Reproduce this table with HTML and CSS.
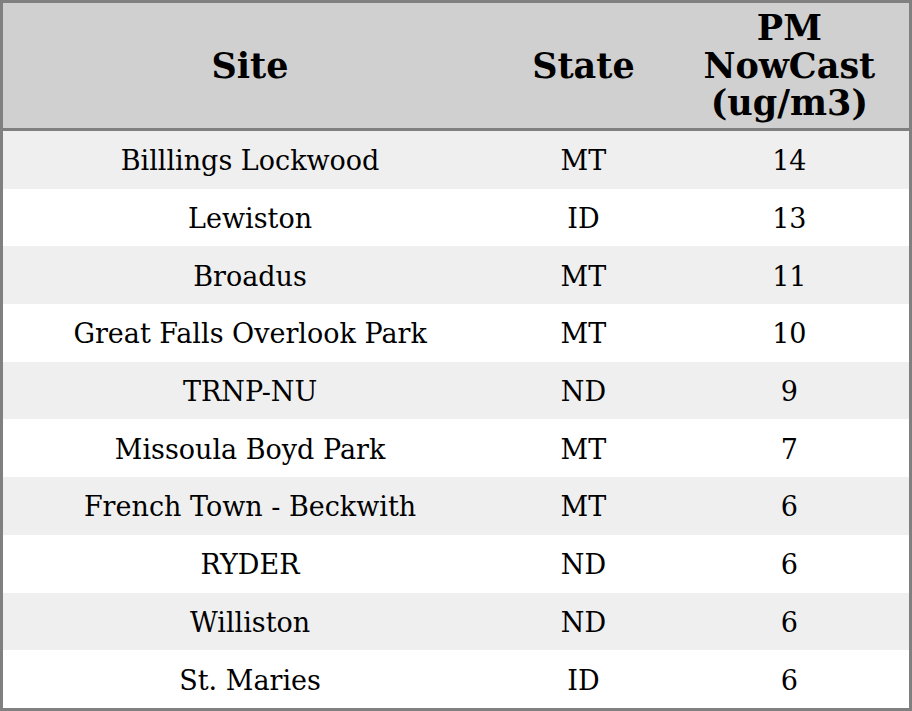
FILE: index.html
```html
<!DOCTYPE html>
<html>
<head>
<meta charset="utf-8">
<link rel="stylesheet" href="styles.css">
</head>
<body>
<table class="aq">
  <colgroup><col class="c-site"><col class="c-state"><col class="c-pm"></colgroup>
  <thead>
    <tr><th>Site</th><th>State</th><th>PM<br>NowCast<br>(ug/m3)</th></tr>
  </thead>
  <tbody>
    <tr><td>Billlings Lockwood</td><td>MT</td><td>14</td></tr>
    <tr><td>Lewiston</td><td>ID</td><td>13</td></tr>
    <tr><td>Broadus</td><td>MT</td><td>11</td></tr>
    <tr><td>Great Falls Overlook Park</td><td>MT</td><td>10</td></tr>
    <tr><td>TRNP-NU</td><td>ND</td><td>9</td></tr>
    <tr><td>Missoula Boyd Park</td><td>MT</td><td>7</td></tr>
    <tr><td>French Town - Beckwith</td><td>MT</td><td>6</td></tr>
    <tr><td>RYDER</td><td>ND</td><td>6</td></tr>
    <tr><td>Williston</td><td>ND</td><td>6</td></tr>
    <tr><td>St. Maries</td><td>ID</td><td>6</td></tr>
  </tbody>
</table>
</body>
</html>
```
FILE: styles.css
```css
html, body { margin: 0; padding: 0; background: #fff; }
.aq {
  width: 912px;
  height: 711px;
  border-collapse: collapse;
  border: 3px solid #808080;
  font-family: "DejaVu Serif", serif;
  color: #000;
  table-layout: fixed;
}
.c-site { width: 494px; }
.c-state { width: 172px; }
.c-pm { width: 240px; }
.aq th {
  background: #d0d0d0;
  font-size: 35px;
  font-weight: bold;
  line-height: 37.5px;
  height: 125px;
  padding: 0;
  text-align: center;
  vertical-align: middle;
  border-bottom: 3px solid #808080;
}
.aq td {
  font-size: 27px;
  text-align: center;
  vertical-align: middle;
  height: 55.7px;
  padding: 2px 0 0 0;
}
.aq tbody tr:nth-child(odd) { background: #efefef; }
.aq tbody tr:nth-child(even) { background: #fff; }
```
